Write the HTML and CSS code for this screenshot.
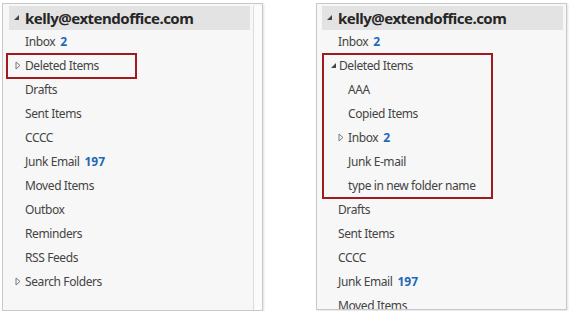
FILE: index.html
```html
<!DOCTYPE html>
<html lang="en">
  <head>
    <meta charset="UTF-8" />
    <title>Deleted Items folders</title>
    <link rel="stylesheet" href="styles.css">
  </head>
  <body>
    <div class="panes">
      <div class="pane pane-left">
        <div class="tree">
          <div class="account"><svg class="tw" viewBox="0 0 7 7"><polygon points="6,1 6,6 1,6" /></svg>kelly@extendoffice.com</div>
          <div class="row">Inbox <b class="count">2</b></div>
          <div class="row callout callout-one"><svg class="tw closed" viewBox="0 0 6 9"><polygon points="1,1 5,4.5 1,8" /></svg>Deleted Items</div>
          <div class="row">Drafts</div>
          <div class="row">Sent Items</div>
          <div class="row">CCCC</div>
          <div class="row">Junk Email <b class="count">197</b></div>
          <div class="row">Moved Items</div>
          <div class="row">Outbox</div>
          <div class="row">Reminders</div>
          <div class="row">RSS Feeds</div>
          <div class="row"><svg class="tw closed" viewBox="0 0 6 9"><polygon points="1,1 5,4.5 1,8" /></svg>Search Folders</div>
        </div>
        <div class="scroll"></div>
      </div>

      <div class="pane pane-right">
        <div class="tree">
          <div class="account"><svg class="tw" viewBox="0 0 7 7"><polygon points="6,1 6,6 1,6" /></svg>kelly@extendoffice.com</div>
          <div class="row">Inbox <b class="count">2</b></div>
          <div class="callout callout-group">
            <div class="row"><svg class="tw" viewBox="0 0 7 7"><polygon points="6,1 6,6 1,6" /></svg>Deleted Items</div>
            <div class="row sub">AAA</div>
            <div class="row sub">Copied Items</div>
            <div class="row sub"><svg class="tw closed" viewBox="0 0 6 9"><polygon points="1,1 5,4.5 1,8" /></svg>Inbox <b class="count">2</b></div>
            <div class="row sub">Junk E-mail</div>
            <div class="row sub">type in new folder name</div>
          </div>
          <div class="row">Drafts</div>
          <div class="row">Sent Items</div>
          <div class="row">CCCC</div>
          <div class="row">Junk Email <b class="count">197</b></div>
          <div class="row">Moved Items</div>
        </div>
      </div>
    </div>
  </body>
</html>
```

FILE: styles.css
```css
body {
  margin: 0;
  background: #fff;
  font-family: "Noto Sans", "Open Sans", sans-serif;
  font-size: 12px;
  letter-spacing: -0.4px;
  color: #444;
}
.panes {
  display: flex;
  align-items: flex-start;
  padding: 3px 0 0 2px;
  gap: 53px;
}
.pane {
  display: flex;
  border: 1px solid #c9c9c9;
  background: #f7f7f7;
  box-shadow: 1px 1px 2px rgba(0, 0, 0, 0.12);
  overflow: hidden;
  box-sizing: border-box;
}
.pane-left {
  width: 261px;
  height: 308px;
  padding: 2px 0 0 6px;
}
.pane-right {
  width: 251px;
  height: 307px;
  padding: 2px 3px 0 5px;
}
.tree {
  flex: 1;
}
.pane-left .tree {
  margin-right: 3px;
}
.scroll {
  width: 8px;
  border-left: 1px solid #dcdcdc;
  background: #fbfbfb;
}
.account {
  display: flex;
  align-items: center;
  height: 24px;
  padding: 0 0 1px 4px;
  box-sizing: border-box;
  background: #e3e3e3;
  font-size: 15px;
  font-weight: bold;
  letter-spacing: -0.5px;
  color: #262626;
}
.account .tw {
  margin-right: 5px;
}
.row {
  display: flex;
  align-items: center;
  height: 24px;
  padding: 0 0 2px 16px;
  box-sizing: border-box;
  white-space: nowrap;
}
.row .tw {
  margin-left: -9px;
  margin-right: 2px;
}
.row.sub {
  padding-left: 25px;
}
.count {
  color: #1f68b7;
  margin-left: 5px;
  letter-spacing: 0;
}
.tw {
  display: inline-block;
  width: 7px;
  height: 7px;
  fill: #444;
}
.row .tw.closed {
  width: 6px;
  height: 9px;
  margin-left: -10px;
  margin-right: 4px;
  fill: none;
  stroke: #7a7a7a;
  stroke-width: 1;
}
.callout {
  outline: 2px solid #a11a1f;
}
.callout-one {
  width: 129px;
  outline-offset: -1px;
  margin-left: -2px;
  padding-left: 18px;
}
.callout-group {
  width: 169px;
  outline-offset: -1px;
  margin-left: 1px;
}
```
